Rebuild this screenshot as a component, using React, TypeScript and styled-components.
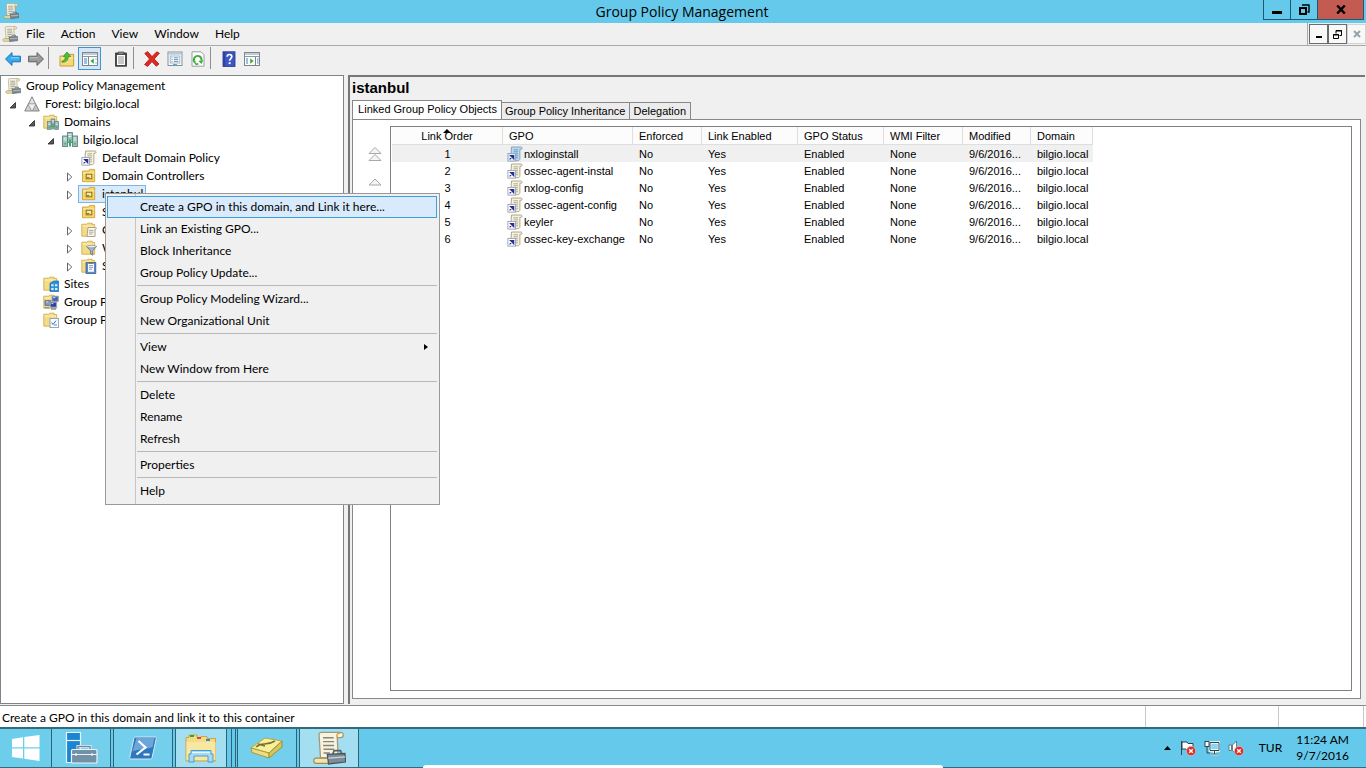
import React from "react";
import styled, { createGlobalStyle, css } from "styled-components";

const ui = '"Lato", "Open Sans", sans-serif';
const classic = '"Liberation Sans", Arial, sans-serif';

const GlobalStyle = createGlobalStyle`
  *, *::before, *::after { box-sizing: border-box; }
  body { margin: 0; background: #f0f0f0; color: #000; font: 12px/16px ${ui}; }
  button { margin: 0; padding: 0; border: 0; background: none; color: inherit; font: inherit; }
  ul { list-style: none; margin: 0; padding: 0; }
  svg { display: block; flex: none; }
`;

const Screen = styled.div`
  position: relative;
  display: flex;
  flex-direction: column;
  min-height: 100vh;
`;

/* ---------- window frame ---------- */

const TitleBar = styled.header`
  display: flex;
  justify-content: space-between;
  height: 23px;
  padding: 0 2px 0 3px;
  background: #64c9ea;
`;

const TitleIcon = styled.span`
  padding-top: 3px;
`;

const WindowTitle = styled.h1`
  flex: 1;
  margin: 0;
  padding-left: 82px;
  text-align: center;
  font: 14px/24px "Open Sans", sans-serif;
`;

const WindowButtons = styled.div`
  display: flex;
  height: 20px;
  border: 1px solid #1d5a70;
  border-top: 0;
`;

const WindowButton = styled.button<{ $close?: boolean }>`
  display: grid;
  place-items: center;
  width: ${(p) => (p.$close ? 46 : 27)}px;
  background: ${(p) => (p.$close ? "#c45b52" : "transparent")};
  & + & { border-left: 1px solid #1d5a70; }
  &:first-child { width: 26px; }
`;

const MenuBar = styled.nav`
  display: flex;
  align-items: stretch;
  height: 23px;
  padding-left: 2px;
  border-bottom: 1px solid #aaaaaa;
  background: #f0f0f0;
`;

const MenuBarIcon = styled.span`
  display: flex;
  align-items: center;
  width: 16px;
`;

const MenuBarButton = styled.button`
  padding: 0 8px 1px;
`;

const ChildButtons = styled.div`
  display: flex;
  align-items: center;
  margin-left: auto;
  padding-left: 1px;
  border-left: 1px solid #aaaaaa;
`;

const ChildButton = styled.button<{ $off?: boolean }>`
  display: grid;
  place-items: center;
  width: 19px;
  height: 20px;
  border: 1px solid ${(p) => (p.$off ? "#d4d4d4" : "#6c6c6c")};
  background: #f8f8f8;
`;

const ToolBar = styled.div`
  display: flex;
  height: 29px;
  padding: 1px;
  background: #f0f0f0;
`;

const ToolButton = styled.button<{ $pressed?: boolean }>`
  display: grid;
  place-items: center;
  width: 23px;
  height: 23px;
  ${(p) =>
    p.$pressed &&
    css`
      border: 1px solid #3c94d6;
      background: #d3e7f9;
    `}
`;

const ToolGap = styled.span<{ $line?: boolean }>`
  width: 1px;
  height: 22px;
  margin: 0 6px 0 1px;
  background: ${(p) => (p.$line ? "#8f8f8f" : "transparent")};
`;

/* ---------- console tree ---------- */

const Workspace = styled.main`
  display: flex;
  flex: 1;
  gap: 4px;
  padding-right: 1px;
`;

const TreePane = styled.section`
  flex: none;
  width: 344px;
  margin-bottom: 1px;
  padding-top: 1px;
  border: 1px solid #7f838a;
  background: #fff;
`;

const TreeRow = styled.li<{ $level: number }>`
  display: flex;
  align-items: center;
  height: 18px;
  padding-left: ${(p) => p.$level * 19 - (p.$level ? 11 : -1)}px;
  white-space: nowrap;
`;

const Expander = styled.button`
  display: grid;
  place-items: center start;
  width: 12px;
  height: 18px;
  padding-top: 2px;
`;

const TreeLabel = styled.span<{ $selected?: boolean }>`
  display: flex;
  align-items: center;
  gap: 5px;
  height: 18px;
  padding: 0 2px;
  border: 1px solid ${(p) => (p.$selected ? "#7eb4ea" : "transparent")};
  background: ${(p) => (p.$selected ? "#d9eafb" : "transparent")};
`;

/* ---------- details pane ---------- */

const DetailPane = styled.section`
  display: flex;
  flex: 1;
  flex-direction: column;
  min-width: 0;
  margin-bottom: 1px;
  padding: 0 4px 5px 2px;
  border-top: 2px solid #777;
  border-left: 2px solid #777;
  background: #f0f0f0;
  font: 11px/14px ${classic};
`;

const PaneTitle = styled.h2`
  height: 23px;
  margin: 0;
  font: bold 15px/22px ${classic};
`;

const Tabs = styled.div`
  display: flex;
  align-items: flex-end;
`;

const Tab = styled.button<{ $active?: boolean }>`
  height: 17px;
  padding: 0 4px 0 3px;
  border: 1px solid #888;
  border-bottom: 0;
  background: #ececec;
  & + & { border-left: 0; }
  ${(p) =>
    p.$active &&
    css`
      width: 150px;
      height: 20px;
      margin-bottom: -1px;
      padding: 0 3px 3px 4px;
      background: #fff;
    `}
`;

const TabPage = styled.div`
  display: flex;
  flex: 1;
  padding: 6px 8px 7px 0;
  border: 1px solid #888;
  background: #fff;
`;

const OrderButtons = styled.div`
  display: flex;
  flex: none;
  flex-direction: column;
  align-items: center;
  gap: 16px;
  width: 37px;
  padding: 20px 0 0 7px;
`;

const ListBox = styled.div`
  flex: 1;
  min-width: 0;
  padding-left: 1px;
  border: 1px solid #808080;
  background: #fff;
`;

const Grid = styled.table`
  table-layout: fixed;
  width: 701px;
  border-collapse: separate;
  border-spacing: 0;
`;

const HeadCell = styled.th<{ $w: number; $center?: boolean }>`
  position: relative;
  width: ${(p) => p.$w}px;
  height: 18px;
  padding: ${(p) => (p.$center ? "1px 0 0" : "1px 0 0 6px")};
  border-right: 1px solid #dedede;
  border-bottom: 1px solid #dedede;
  background: #fcfcfc;
  text-align: ${(p) => (p.$center ? "center" : "left")};
  font-weight: normal;
  white-space: nowrap;
`;

const SortMark = styled.span`
  position: absolute;
  top: 2px;
  left: 50%;
  margin-left: -4px;
`;

const BodyRow = styled.tr<{ $selected?: boolean }>`
  background: ${(p) => (p.$selected ? "#f0f0f0" : "#fff")};
`;

const Cell = styled.td<{ $center?: boolean }>`
  height: 17px;
  padding: ${(p) => (p.$center ? "0" : "0 0 0 6px")};
  text-align: ${(p) => (p.$center ? "center" : "left")};
  white-space: nowrap;
`;

const NameCell = styled(Cell)`
  padding-left: 4px;
`;

const GpoName = styled.span`
  display: flex;
  align-items: center;
  gap: 1px;
  height: 17px;
`;

/* ---------- context menu ---------- */

const ContextMenu = styled.div`
  position: absolute;
  top: 193px;
  left: 105px;
  width: 335px;
  padding: 2px 2px 2px 1px;
  border: 1px solid #999;
  background: linear-gradient(to right, transparent 29px, #c4c4c4 29px, #c4c4c4 30px, transparent 30px) #f0f0f0;
`;

const MenuItem = styled.button<{ $hot?: boolean }>`
  display: flex;
  align-items: center;
  justify-content: space-between;
  width: 100%;
  height: 22px;
  padding: 0 7px 0 32px;
  border: 1px solid ${(p) => (p.$hot ? "#3d9fdb" : "transparent")};
  background: ${(p) => (p.$hot ? "#d8eafb" : "transparent")};
  text-align: left;
`;

const MenuRule = styled.hr`
  height: 1px;
  margin: 1px 0 2px 30px;
  border: 0;
  background: #b8b8b8;
`;

/* ---------- status bar and task bar ---------- */

const StatusBar = styled.footer`
  display: flex;
  height: 22px;
  border-top: 1px solid #8a8a8a;
  background: #fff;
`;

const StatusText = styled.span`
  flex: 1;
  padding: 4px 2px 0;
`;

const StatusCell = styled.span<{ $w: number }>`
  width: ${(p) => p.$w}px;
  border-left: 1px solid #c8c8c8;
`;

const TaskBar = styled.div`
  position: relative;
  display: flex;
  height: 41px;
  border-top: 2px solid #35697c;
  border-bottom: 1px solid #35697c;
  background: #64c9ea;
`;

const StartButton = styled.button`
  display: grid;
  place-items: center;
  width: 51px;
  background: #6dceec;
`;

const TaskButton = styled.button<{ $bg?: string; $w?: number }>`
  display: grid;
  place-items: center;
  width: ${(p) => p.$w ?? 60}px;
  margin-right: 2px;
  border: solid #2b6478;
  border-width: 0 1px;
  background: ${(p) => p.$bg ?? "#74cfec"};
`;

const StackEdge = styled.span`
  width: 4px;
  margin-left: -1px;
  margin-right: 1px;
  border-right: 1px solid #2b6478;
`;

const Tray = styled.div`
  display: flex;
  align-items: center;
  gap: 8px;
  margin-left: auto;
  padding-right: 17px;
`;

const TrayText = styled.span`
  margin-left: 7px;
`;

const Clock = styled.time`
  margin-left: 6px;
  text-align: center;
  line-height: 16px;
`;

const BottomSheet = styled.div`
  position: absolute;
  bottom: -1px;
  left: 31%;
  right: 31%;
  height: 3px;
  border-radius: 4px 4px 0 0;
  background: #fff;
`;

/* ---------- icons ---------- */

const Icon = ({ size = 16, children }: { size?: number; children: React.ReactNode }) => (
  <svg width={size} height={size} viewBox="0 0 16 16" aria-hidden="true">
    {children}
  </svg>
);

const Toolbox = () => (
  <>
    <path d="M9.8 10.8l.6-1.6h3l.6 1.600" fill="none" stroke="#51616b" strokeWidth=".8" />
    <path d="M7.200 11l8.300-.4.3 4-8 .9z" fill="#7d8c97" stroke="#48565f" strokeWidth=".6" />
    <path d="M7.600 12.800l8-.6" stroke="#ccd6dd" strokeWidth=".6" />
  </>
);

const ConsoleIcon = ({ size }: { size?: number }) => (
  <Icon size={size}>
    <path d="M3.300 1.600C3.300.8 4 .6 4.600.6h8.800c1.800 0 1.700 2.500 0 2.500h-1.500l.4 9.500H4z" fill="#f8f3df" stroke="#a2977a" strokeWidth=".6" />
    <path d="M11.900 3.100c-.6-1.300.2-2.300 1.500-2.200" fill="none" stroke="#c9a44c" strokeWidth=".7" />
    <path d="M1.500 12.800h7v2.400H2c-1.400 0-1.600-1.800-.5-2.400z" fill="#f0e4b4" stroke="#a08c4c" strokeWidth=".6" />
    <path d="M5.200 3.200h5M5.200 5h5.200M5.200 6.800h5.200M5.400 8.600h5M5.400 10.400h3" stroke="#87857b" strokeWidth=".7" />
    <Toolbox />
  </Icon>
);

const GpoIcon = ({ blue }: { blue?: boolean }) => (
  <Icon>
    <path d="M4.500 1h9.200c1.800 0 1.800 2.300.2 2.300h-1v9.200c0 2-1.600 2.200-2 2.200H3.500z" fill={blue ? "#b9dbf1" : "#f7f2dc"} stroke={blue ? "#6c93b0" : "#9a927a"} strokeWidth=".8" />
    <path d="M6.500 3.800h4.500M6.500 5.800h4.500M9 7.800h2M9 9.800h2M9 11.800h2" stroke={blue ? "#5c86a8" : "#9b988c"} strokeWidth=".8" />
    <rect x=".9" y="7.400" width="7.600" height="7.700" fill={blue ? "#dcefff" : "#fff"} stroke="#8e95ad" strokeWidth=".8" />
    <path d="M2.600 13.400l3-3M3.600 9.600h3.100v3.100z" fill="#27318f" stroke="#27318f" strokeWidth="1.200" />
  </Icon>
);

const Folder = () => (
  <g>
    <path d="M.8 2.200h5l1-1h4.400v1.400h2.500v11.600H.8z" fill="#f4dc86" stroke="#cba63f" strokeWidth=".8" />
    <path d="M1.400 4h11.800" stroke="#fcf0bb" />
  </g>
);

const UnitIcon = () => (
  <Icon>
    <path d="M1.500 3h6l1-1.600h5.200v12.300H1.500z" fill="#f5d66b" stroke="#c79a2b" strokeWidth=".8" />
    <path d="M2 5h11.500" stroke="#fdf0b8" />
    <rect x="5.200" y="6.200" width="5.600" height="4.600" fill="#fae99a" stroke="#8a6c1d" />
    <path d="M6 9.600h2.300" stroke="#8a6c1d" />
  </Icon>
);

const Servers = ({ x = 0, y = 0, s = 1, fill = "#9cc2bd" }: { x?: number; y?: number; s?: number; fill?: string }) => (
  <g transform={`translate(${x} ${y}) scale(${s})`}>
    <rect x="5.400" y=".6" width="5" height="10" fill={fill} stroke="#5f7f84" strokeWidth=".9" />
    <rect x=".6" y="4" width="5" height="10.500" fill={fill} stroke="#5f7f84" strokeWidth=".9" />
    <rect x="10.400" y="4" width="5" height="10.500" fill={fill} stroke="#5f7f84" strokeWidth=".9" />
    <path d="M6.400 2.600h3M6.400 4.600h3M1.600 6h3M1.600 8h3M11.400 6h3M11.400 8h3" stroke="#eef6f4" />
    <path d="M7 7.500h2v7H7zM2.400 11h1.600v1.600H2.400zM12 11h1.600v1.600H12z" fill="#3fae58" />
  </g>
);

const ForestIcon = () => (
  <Icon>
    <path d="M8 .8L11.600 8H4.400z" fill="#e3e3e3" stroke="#7b7b7b" strokeWidth=".9" />
    <path d="M4.200 8.200L7.800 15H.7z" fill="#d2d2d2" stroke="#7b7b7b" strokeWidth=".9" />
    <path d="M11.800 8.200L15.300 15H8.200z" fill="#c2c2c2" stroke="#7b7b7b" strokeWidth=".9" />
    <path d="M4.600 8.400h6.800L8 14.600z" fill="#eee" />
  </Icon>
);

const DomainsIcon = () => (<Icon><Folder /><Servers x={4} y={4.5} s={0.75} fill="#86aab8" /></Icon>);
const DomainIcon = () => (<Icon><Servers /></Icon>);

const GpoFolderIcon = () => (
  <Icon>
    <Folder />
    <path d="M7 5.500h7.600c1 0 1 1.800 0 1.800h-.6v7.200H6z" fill="#faf7ea" stroke="#94907f" strokeWidth=".8" />
    <path d="M8 8.400h4.500M8 10.200h4.500M8 12h3.500" stroke="#98958b" strokeWidth=".8" />
  </Icon>
);

const FilterFolderIcon = () => (
  <Icon>
    <Folder />
    <path d="M5.500 6.500h10l-3.800 4.300v4.400l-2.200-1.600v-2.800z" fill="#a9b6c3" stroke="#5f6d7c" strokeWidth=".8" />
    <ellipse cx="10.500" cy="6.600" rx="4.800" ry="1.300" fill="#e3e9ee" stroke="#6f7d8c" strokeWidth=".6" />
  </Icon>
);

const StarterFolderIcon = () => (
  <Icon>
    <Folder />
    <rect x="5" y="4.600" width="9.800" height="10.800" fill="#5a8bc9" stroke="#3b5f96" strokeWidth=".8" />
    <path d="M7 5.800h6v8H7z" fill="#fbfbff" />
    <path d="M8 7.600h4M8 9.400h4M8 11.200h3" stroke="#6a87b5" strokeWidth=".8" />
    <path d="M8 4h4v1.600H8z" fill="#7d6b3b" />
  </Icon>
);

const SitesIcon = () => (
  <Icon>
    <Folder />
    <path d="M7 7.200l4-2.200h4.600v10.600H7z" fill="#2f8fdb" stroke="#1763a8" strokeWidth=".7" />
    <path d="M8.200 8.200h2.400v2H8.200zM12 8.200h2.400v2H12zM8.200 12h2.400v2H8.200zM12 12h2.400v2H12z" fill="#d6ecff" />
  </Icon>
);

const ModelingIcon = () => (
  <Icon>
    <Folder />
    <path d="M2 6.600h5.600v4.800H2z" fill="#8a9bc8" stroke="#5b6270" strokeWidth=".8" />
    <path d="M9 2.200h6.300v5.200H9z" fill="#4a62b4" stroke="#9aa3b3" />
    <path d="M7.300 8.200h6.200v5h-6.200z" fill="#2b3fb0" stroke="#9aa3b3" />
    <path d="M1.500 13.600h4.600M8 15h5M12 7.600v.6" stroke="#8b929f" strokeWidth="1.400" />
    <path d="M3 7.800h2M10 3.600h2.400M8.400 9.600h2" stroke="#c9d8f8" />
  </Icon>
);

const ResultsIcon = () => (
  <Icon>
    <Folder />
    <rect x="7" y="6.400" width="8.400" height="9.200" fill="#f8fbff" stroke="#8393aa" strokeWidth=".8" />
    <path d="M8.500 10.500l1.500 2 3-3.800" fill="none" stroke="#2a72c8" />
    <path d="M11 13h3" stroke="#6b88b0" />
  </Icon>
);

const ArrowIcon = ({ forward }: { forward?: boolean }) => (
  <Icon>
    <path
      d={forward ? "M15.500 8L9 1.600v3.600H.6v5.600H9v3.600z" : "M.5 8L7 1.600v3.600h8.400v5.600H7v3.600z"}
      fill={forward ? "#9a9a9a" : "#38a9ee"}
      stroke={forward ? "#606060" : "#1673b5"}
    />
    <path d={forward ? "M2 6.800h8" : "M6 6.800h8"} stroke={forward ? "#c4c4c4" : "#95d9fb"} />
  </Icon>
);

const UpFolderIcon = () => (
  <Icon>
    <path d="M1 5h4l1.200-1.600h8.400V15H1z" fill="#f6d978" stroke="#bf9530" strokeWidth=".9" />
    <path d="M1.600 7h12.600" stroke="#fdf0b4" />
    <path d="M3 10.200c2.400-.4 3.200-2 3.300-4.600H4.200L8 1l3.800 4.600H9.200c0 4-2.400 5.800-6.200 5.600z" fill="#4fbf38" stroke="#2f8a22" strokeWidth=".7" />
  </Icon>
);

const PaneIcon = ({ right }: { right?: boolean }) => (
  <Icon>
    <rect x=".5" y="1.500" width="15" height="13" fill="#fbfcfd" stroke="#7d8790" />
    <path d="M1 3h14M1 5.500h14" stroke="#8b98a4" />
    <path d={right ? "M11.500 6v8" : "M6.500 6v8"} stroke="#7d8790" />
    <path d={right ? "M2 8h2M2 10h2M2 12h2M13 8h1.600M13 10h1.600M13 12h1.600" : "M2 8h3M2 10h3M2 12h3M13.500 8h1M13.500 12h1"} stroke="#4d7fc0" />
    <path d={right ? "M6.200 7.400l3.400 2.700-3.400 2.700z" : "M11.800 7.400v5.400L8.400 10.100z"} fill="#2fae2f" />
  </Icon>
);

const ClipboardIcon = () => (
  <Icon>
    <rect x="2.600" y="2" width="10.800" height="13.200" fill="#4c4c4c" stroke="#303030" strokeWidth=".8" />
    <rect x="4" y="4" width="8" height="10" fill="#fff" />
    <path d="M5 6h6M5 8h6M5 10h6M5 12h6" stroke="#909090" />
    <path d="M5.200 1h5.600v2.400H5.200z" fill="#8b8b8b" stroke="#444" strokeWidth=".7" />
  </Icon>
);

const DeleteIcon = () => (
  <Icon>
    <path d="M.8 2.400L3.600.6l4.400 5L12.800.8l2.600 1.400L10.200 8l4.800 5-2.800 2.200L8 10.600 3.600 15.400.6 13.600 5.600 8z" fill="#e02a20" stroke="#a81710" strokeWidth=".8" />
  </Icon>
);

const PropertiesIcon = () => (
  <Icon>
    <rect x="1" y="1" width="14" height="13.500" fill="#f9fbfc" stroke="#83919e" />
    <path d="M1.500 2.800h13" stroke="#b9c6d1" strokeWidth="1.600" />
    <rect x="3.200" y="5" width="9.600" height="7" fill="#fff" stroke="#93a6b6" strokeWidth=".8" />
    <path d="M4.500 6.800h1M6.800 6.800h4.500M4.500 8.600h1M6.800 8.600h4.500M4.500 10.400h1M6.800 10.400h4.500" stroke="#4f86bb" strokeWidth=".9" />
    <path d="M6 13.500h4" stroke="#48b5db" />
  </Icon>
);

const RefreshIcon = () => (
  <Icon>
    <path d="M2 .8h9l3 3v11.400H2z" fill="#fdfdfd" stroke="#8e959b" strokeWidth=".9" />
    <path d="M5.400 11.800A3.800 3.800 0 1 1 11.400 9.400" fill="none" stroke="#3aad35" strokeWidth="1.900" />
    <path d="M13.200 9l-1.600 4L8.400 10z" fill="#3aad35" />
    <path d="M5 12.400c1 .8 2.400.8 3.400.4" fill="none" stroke="#3aad35" strokeWidth="1.600" />
  </Icon>
);

const HelpIcon = () => (
  <Icon>
    <rect x="2" y=".8" width="12" height="14.600" fill="#3b55c4" stroke="#22337f" strokeWidth=".8" />
    <path d="M3.200 1v14" stroke="#243a94" />
    <path d="M6.200 5.800c0-3 4.600-3 4.600-.2 0 2-2.200 1.900-2.200 4.200" fill="none" stroke="#fff" strokeWidth="1.700" />
    <rect x="7.700" y="11.200" width="1.900" height="1.900" fill="#fff" />
  </Icon>
);

const Triangle = ({ open }: { open?: boolean }) => (
  <svg width="8" height="10" viewBox="0 0 8 10" aria-hidden="true">
    {open ? (
      <path d="M6.500 2.500v5.500H1z" fill="#5a5a5a" stroke="#262626" strokeWidth=".8" />
    ) : (
      <path d="M1.500 1v8L5.800 5z" fill="#fff" stroke="#666" />
    )}
  </svg>
);

const Badge = () => (
  <g>
    <circle cx="11" cy="11" r="4.700" fill="#d8302c" stroke="#f6c9c6" strokeWidth=".6" />
    <path d="M9.200 9.200l3.600 3.600M12.800 9.200l-3.600 3.600" stroke="#fff" strokeWidth="1.400" />
  </g>
);

/* ---------- content ---------- */

type Node = { id: string; level: number; text: string; icon: React.ReactNode; state?: "open" | "closed"; selected?: boolean };

const tree: Node[] = [
  { id: "root", level: 0, text: "Group Policy Management", icon: <ConsoleIcon /> },
  { id: "forest", level: 1, text: "Forest: bilgio.local", icon: <ForestIcon />, state: "open" },
  { id: "domains", level: 2, text: "Domains", icon: <DomainsIcon />, state: "open" },
  { id: "domain", level: 3, text: "bilgio.local", icon: <DomainIcon />, state: "open" },
  { id: "default", level: 4, text: "Default Domain Policy", icon: <GpoIcon /> },
  { id: "controllers", level: 4, text: "Domain Controllers", icon: <UnitIcon />, state: "closed" },
  { id: "istanbul", level: 4, text: "istanbul", icon: <UnitIcon />, state: "closed", selected: true },
  { id: "unit", level: 4, text: "S", icon: <UnitIcon /> },
  { id: "objects", level: 4, text: "G", icon: <GpoFolderIcon />, state: "closed" },
  { id: "filters", level: 4, text: "W", icon: <FilterFolderIcon />, state: "closed" },
  { id: "starters", level: 4, text: "S", icon: <StarterFolderIcon />, state: "closed" },
  { id: "sites", level: 2, text: "Sites", icon: <SitesIcon /> },
  { id: "modeling", level: 2, text: "Group P", icon: <ModelingIcon /> },
  { id: "results", level: 2, text: "Group P", icon: <ResultsIcon /> },
];

const columns: [string, number][] = [
  ["Link Order", 111],
  ["GPO", 130],
  ["Enforced", 69],
  ["Link Enabled", 96],
  ["GPO Status", 86],
  ["WMI Filter", 79],
  ["Modified", 68],
  ["Domain", 62],
];

const gpos = ["nxloginstall", "ossec-agent-instal", "nxlog-config", "ossec-agent-config", "keyler", "ossec-key-exchange"];

const menuGroups = [
  ["Create a GPO in this domain, and Link it here...", "Link an Existing GPO...", "Block Inheritance", "Group Policy Update..."],
  ["Group Policy Modeling Wizard...", "New Organizational Unit"],
  ["View", "New Window from Here"],
  ["Delete", "Rename", "Refresh"],
  ["Properties"],
  ["Help"],
];

export default function App() {
  return (
    <Screen>
      <GlobalStyle />
      <TitleBar>
        <TitleIcon><ConsoleIcon /></TitleIcon>
        <WindowTitle>Group Policy Management</WindowTitle>
        <WindowButtons>
          <WindowButton aria-label="Minimize">
            <svg width="10" height="10"><path d="M0 6h10v3H0z" /></svg>
          </WindowButton>
          <WindowButton aria-label="Restore">
            <svg width="11" height="11" fill="none" stroke="#000"><path d="M1 4h6v6H1z" strokeWidth="2" /><path d="M3 1h7v7H8.500" strokeWidth="1.400" /></svg>
          </WindowButton>
          <WindowButton $close aria-label="Close">
            <svg width="10" height="9" stroke="#000" strokeWidth="2.400"><path d="M1.200.5l7.600 8M8.800.5l-7.600 8" /></svg>
          </WindowButton>
        </WindowButtons>
      </TitleBar>

      <MenuBar aria-label="Main menu">
        <MenuBarIcon><ConsoleIcon /></MenuBarIcon>
        {["File", "Action", "View", "Window", "Help"].map((m) => (
          <MenuBarButton key={m}>{m}</MenuBarButton>
        ))}
        <ChildButtons>
          <ChildButton aria-label="Minimize child window">
            <svg width="8" height="8"><path d="M1 6h6v2H1z" /></svg>
          </ChildButton>
          <ChildButton aria-label="Restore child window">
            <svg width="9" height="9" fill="none" stroke="#000"><path d="M.5 4.500h5v4h-5zM0 5h6M3 3.500v-3h5.500v5H6.500M3 1h6" /></svg>
          </ChildButton>
          <ChildButton $off aria-label="Close child window">
            <svg width="8" height="8" stroke="#98a2a8" strokeWidth="2"><path d="M1 1l6 6M7 1L1 7" /></svg>
          </ChildButton>
        </ChildButtons>
      </MenuBar>

      <ToolBar role="toolbar">
        <ToolButton aria-label="Back"><ArrowIcon /></ToolButton>
        <ToolButton aria-label="Forward"><ArrowIcon forward /></ToolButton>
        <ToolGap $line />
        <ToolButton aria-label="Up one level"><UpFolderIcon /></ToolButton>
        <ToolButton $pressed aria-label="Console tree"><PaneIcon /></ToolButton>
        <ToolGap />
        <ToolButton aria-label="Paste"><ClipboardIcon /></ToolButton>
        <ToolGap $line />
        <ToolButton aria-label="Delete"><DeleteIcon /></ToolButton>
        <ToolButton aria-label="Properties"><PropertiesIcon /></ToolButton>
        <ToolButton aria-label="Refresh"><RefreshIcon /></ToolButton>
        <ToolGap $line />
        <ToolButton aria-label="Help"><HelpIcon /></ToolButton>
        <ToolButton aria-label="Action pane"><PaneIcon right /></ToolButton>
      </ToolBar>

      <Workspace>
        <TreePane>
          <ul>
            {tree.map((n) => (
              <TreeRow key={n.id} $level={n.level}>
                {n.level > 0 && (
                  n.state ? (
                    <Expander aria-label={`Toggle ${n.text}`}><Triangle open={n.state === "open"} /></Expander>
                  ) : (
                    <Expander as="span" />
                  )
                )}
                <TreeLabel $selected={n.selected}>{n.icon}{n.text}</TreeLabel>
              </TreeRow>
            ))}
          </ul>
        </TreePane>

        <DetailPane>
          <PaneTitle>istanbul</PaneTitle>
          <Tabs role="tablist">
            <Tab role="tab" aria-selected $active>Linked Group Policy Objects</Tab>
            <Tab role="tab">Group Policy Inheritance</Tab>
            <Tab role="tab">Delegation</Tab>
          </Tabs>
          <TabPage role="tabpanel">
            <OrderButtons>
              <button aria-label="Move link to top">
                <svg width="16" height="16" fill="#f4f4f4" stroke="#a8a8a8"><path d="M8 1.500L14 7.500H2zM8 8.500l6 6H2z" /></svg>
              </button>
              <button aria-label="Move link up">
                <svg width="16" height="8" fill="#f4f4f4" stroke="#a8a8a8"><path d="M8 1l6 6H2z" /></svg>
              </button>
            </OrderButtons>
            <ListBox>
              <Grid>
                <thead>
                  <tr>
                    {columns.map(([name, w], i) => (
                      <HeadCell key={name} $w={w} $center={i === 0}>
                        {name}
                        {i === 0 && (
                          <SortMark><svg width="8" height="4"><path d="M4 0l4 4H0z" /></svg></SortMark>
                        )}
                      </HeadCell>
                    ))}
                  </tr>
                </thead>
                <tbody>
                  {gpos.map((name, i) => (
                    <BodyRow key={name} $selected={i === 0}>
                      <Cell $center>{i + 1}</Cell>
                      <NameCell><GpoName><GpoIcon blue={i === 0} />{name}</GpoName></NameCell>
                      <Cell>No</Cell>
                      <Cell>Yes</Cell>
                      <Cell>Enabled</Cell>
                      <Cell>None</Cell>
                      <Cell>9/6/2016...</Cell>
                      <Cell>bilgio.local</Cell>
                    </BodyRow>
                  ))}
                </tbody>
              </Grid>
            </ListBox>
          </TabPage>
        </DetailPane>
      </Workspace>

      <StatusBar>
        <StatusText>Create a GPO in this domain and link it to this container</StatusText>
        <StatusCell $w={133} />
        <StatusCell $w={85} />
        <StatusCell $w={3} />
      </StatusBar>

      <TaskBar>
        <StartButton aria-label="Start">
          <svg width="28" height="26" fill="#fff"><path d="M0 4l11-1.700V12.300H0zM12.300 2.100L27.500 0v12.300H12.300zM0 13.600h11v10L0 22zM12.300 13.600h15.200V26l-15.200-2.200z" /></svg>
        </StartButton>
        <TaskButton aria-label="Server Manager">
          <svg width="34" height="34" strokeWidth="1.200">
            <path d="M2.500 1.500h14v30h-14z" fill="#1c85cf" stroke="#e8f6fc" />
            <path d="M2.500 9.500h14" stroke="#e8f6fc" />
            <path d="M14 19v-3.500h12V19" fill="none" stroke="#e8f6fc" strokeWidth="3" />
            <path d="M14 19v-3.500h12V19" fill="none" stroke="#6e8ba0" strokeWidth="1.500" />
            <rect x="7.500" y="18.500" width="25.500" height="13.500" rx="1" fill="#7390a5" stroke="#e8f6fc" />
            <path d="M8 23.500h25M12 22v3M28 22v3" stroke="#e8f6fc" />
          </svg>
        </TaskButton>
        <TaskButton aria-label="Windows PowerShell">
          <svg width="28" height="24">
            <path d="M7 1h19c1.200 0 1.500.8 1.200 1.800l-4 18.400c-.2 1.200-1 1.800-2 1.800H2c-1.200 0-1.500-.8-1.200-1.800l4-18.400C5 1.600 5.800 1 7 1z" fill="#2f77bd" stroke="#d4e8f6" />
            <path d="M7.500 2h18l-2 9C16 14 8 13 3.500 15.500z" fill="#6aa6da" />
            <path d="M9.500 5l7 6.500-9 7M14.500 18.500h6" fill="none" stroke="#fff" strokeWidth="2.200" />
          </svg>
        </TaskButton>
        <TaskButton $w={52} $bg="#a3def1" aria-label="File Explorer">
          <svg width="32" height="30">
            <path d="M1 4.500h3V2h8v2.500h4v-1h6v2h8.500V28H1z" fill="#f5dc82" stroke="#c9a544" />
            <path d="M5 2h4v2H5z" fill="#2ba63f" /><path d="M12 4h4v2h-4z" fill="#d54a3a" /><path d="M21 6h4v2h-4z" fill="#328bd0" />
            <path d="M1.500 9h29v18H1.500z" fill="#f8e7a2" />
            <path d="M6 17.500h20V21h2v8h-5v-6H9v6H4v-8h2z" fill="#a4daf3" stroke="#4a9dca" />
            <path d="M7 19.500h18" stroke="#e6f7fe" />
          </svg>
        </TaskButton>
        <StackEdge /><StackEdge />
        <TaskButton aria-label="Security tool">
          <svg width="34" height="24" strokeLinejoin="round">
            <path d="M1 12L15 2l17 3-13 12z" fill="#f8ef9e" stroke="#b5a743" />
            <path d="M1 12l18 5v5L2 16.500z" fill="#eadd82" stroke="#a99a3b" />
            <path d="M19 17L32 5v6L19 22z" fill="#d7c55b" stroke="#a1902e" />
            <path d="M6 11c7-6 9 0 19-6M8 8l7 2" fill="none" stroke="#7d7122" strokeWidth="1.600" />
          </svg>
        </TaskButton>
        <TaskButton $bg="#a3def1" aria-label="Group Policy Management">
          <ConsoleIcon size={34} />
        </TaskButton>
        <Tray>
          <button aria-label="Show hidden icons"><svg width="9" height="8"><path d="M4.500 2L8 6H1z" /></svg></button>
          <button aria-label="Action center">
            <Icon><path d="M1.500 1v14M2 2h5l1 1.500h5V10H7L6 9H2z" fill="#fff" stroke="#31414a" /><Badge /></Icon>
          </button>
          <button aria-label="Network">
            <Icon><path d="M6 2.500h9v8H6zM10.500 10.500V14M7 14h7.500" fill="#8bd5ee" stroke="#fff" strokeWidth="2.400" /><path d="M6 2.500h9v8H6zM10.500 10.500V14M7 14h7.500M3 6v7h3" fill="none" stroke="#2a4a58" /><rect x="1" y="1.500" width="4" height="5" fill="#fff" stroke="#2a4a58" /></Icon>
          </button>
          <button aria-label="Volume">
            <Icon><path d="M1 5h2.500v5.500H1zM4.500 5L8.500 1v13l-4-3.500z" fill="#fff" stroke="#4a6470" strokeWidth=".8" /><Badge /></Icon>
          </button>
          <TrayText>TUR</TrayText>
          <Clock>11:24 AM<br />9/7/2016</Clock>
        </Tray>
        <BottomSheet />
      </TaskBar>

      <ContextMenu role="menu">
        {menuGroups.map((group, g) => (
          <React.Fragment key={group[0]}>
            {g > 0 && <MenuRule />}
            {group.map((item, i) => (
              <MenuItem key={item} role="menuitem" $hot={g === 0 && i === 0}>
                {item}
                {item === "View" && <svg width="5" height="8"><path d="M0 1l4 3-4 3z" /></svg>}
              </MenuItem>
            ))}
          </React.Fragment>
        ))}
      </ContextMenu>
    </Screen>
  );
}
